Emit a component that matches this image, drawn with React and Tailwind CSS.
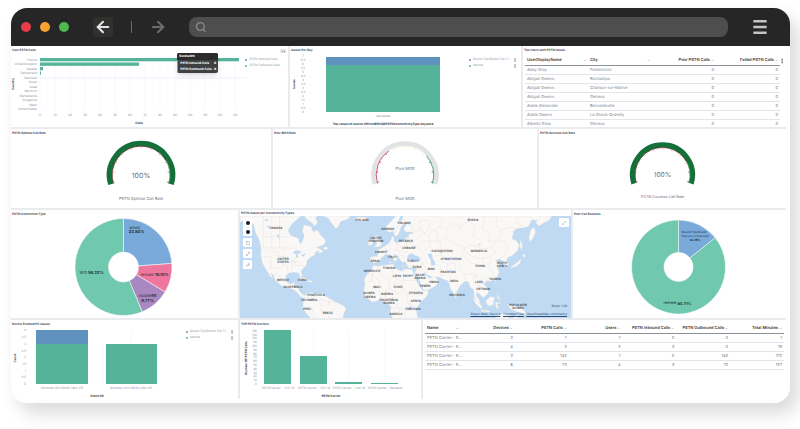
import React, { useState } from "react";
import {
  ArrowLeft,
  ArrowRight,
  ChevronDown,
  Menu,
  Maximize2,
  MoreVertical,
  Search,
  Square,
  Wrench,
} from "lucide-react";

const GREEN = "#54b399";
const BLUE = "#6092c0";

const countries = [
  { name: "France", value: 199 },
  { name: "United Kingdom", value: 99 },
  { name: "Canada", value: 3 },
  { name: "Switzerland", value: 1 },
  { name: "Denmark", value: 0 },
  { name: "Brazil", value: 0 },
  { name: "Israel", value: 0 },
  { name: "Morocco", value: 0 },
  { name: "Netherlands", value: 0 },
  { name: "Singapore", value: 0 },
  { name: "Spain", value: 0 },
  { name: "United States", value: 0 },
];

const users = [
  ["Abby Gray", "Fredericton", 0, 0],
  ["Abigail Owens", "Rochampa", 0, 0],
  ["Abigail Owens", "Champs-sur-Marne", 0, 0],
  ["Abigail Owens", "Geneva", 0, 0],
  ["Adele Alexander", "Bernardsville", 0, 0],
  ["Adele Owens", "Le Grand-Quevilly", 0, 0],
  ["Alberto Silva", "Geneva", 0, 0],
];

const carriers = [
  ["PSTN Carrier - E...", 2, 1, 1, 0, 0, 1],
  ["PSTN Carrier - E...", 4, 3, 3, 3, 0, 15],
  ["PSTN Carrier - E...", 2, 142, 1, 0, 140, 172],
  ["PSTN Carrier - E...", 6, 73, 4, 3, 70, 127],
];

const mapLabels = [
  ["CANADA", 36, 12],
  ["UNITED", 43, 43],
  ["STATES", 43, 46],
  ["MEXICO", 43, 64],
  ["CUBA", 62, 64],
  ["GUATEMALA", 53, 71],
  ["VENEZUELA", 76, 79],
  ["COLOMBIA", 69, 84],
  ["PERU", 67, 93],
  ["BRAZIL", 88, 97],
  ["ICELAND", 122, 4],
  ["UNITED", 136, 22],
  ["KINGDOM", 136, 25],
  ["NORWAY", 148, 13],
  ["FINLAND", 164, 7],
  ["FRANCE", 141, 36],
  ["SPAIN", 135, 45],
  ["ITALY", 152, 41],
  ["BELARUS", 166, 25],
  ["UKRAINE", 169, 32],
  ["RUSSIA", 233, 4],
  ["MOROCCO", 132, 55],
  ["TUNISIA", 149, 52],
  ["LIBYA", 157, 60],
  ["EGYPT", 168, 60],
  ["MALI", 137, 71],
  ["CHAD", 158, 71],
  ["GUINEA", 129, 77],
  ["LIBERIA", 130, 81],
  ["NIGERIA", 147, 78],
  ["EQUATORIAL", 149, 84],
  ["GUINEA", 149, 87],
  ["ETHIOPIA", 176, 77],
  ["KENYA", 176, 85],
  ["TANZANIA", 173, 93],
  ["ANGOLA", 156, 98],
  ["TURKEY", 173, 45],
  ["SYRIA", 177, 51],
  ["SAUDI", 180, 59],
  ["ARABIA", 180, 62],
  ["YEMEN", 185, 70],
  ["OMAN", 194, 66],
  ["IRAN", 191, 53],
  ["KAZAKHSTAN", 202, 35],
  ["KYRGYZSTAN", 211, 43],
  ["PAKISTAN", 208, 56],
  ["INDIA", 214, 65],
  ["SRI LANKA", 217, 79],
  ["MONGOLIA", 239, 35],
  ["CHINA", 240, 50],
  ["SOUTH", 262, 47],
  ["KOREA", 262, 50],
  ["TAIWAN", 255, 63],
  ["LAOS", 239, 66],
  ["VIETNAM", 243, 73],
  ["PAPUA NEW", 278, 89],
  ["GUINEA", 278, 92],
];

// Point on a circle, 0 degrees is at the top and it goes clockwise
const polar = (cx, cy, r, deg) => {
  const a = ((deg - 90) * Math.PI) / 180;
  return [cx + r * Math.cos(a), cy + r * Math.sin(a)];
};

const arcPath = (cx, cy, r, from, to) => {
  const [x1, y1] = polar(cx, cy, r, from);
  const [x2, y2] = polar(cx, cy, r, to);
  return `M${x1} ${y1}A${r} ${r} 0 ${to - from > 180 ? 1 : 0} 1 ${x2} ${y2}`;
};

const slicePath = (cx, cy, r, inner, from, to) => {
  const [x1, y1] = polar(cx, cy, inner, to);
  const [x2, y2] = polar(cx, cy, inner, from);
  const large = to - from > 180 ? 1 : 0;
  return `${arcPath(cx, cy, r, from, to)}L${x1} ${y1}A${inner} ${inner} 0 ${large} 0 ${x2} ${y2}Z`;
};

const Panel = ({ title, tight, children }) => (
  <section className="relative min-w-0 bg-white">
    {title && (
      <h2
        className={`pl-px text-[3px] font-bold whitespace-nowrap text-[#4a4d57] ${
          tight ? "h-[6px] leading-[6px]" : "h-2 leading-[8px]"
        }`}
      >
        {title}
      </h2>
    )}
    {children}
  </section>
);

const Tick = ({ x, y, anchor = "middle", children }) => (
  <text
    x={x}
    y={y}
    textAnchor={anchor}
    dominantBaseline="central"
    className="fill-[#8a8f9b] text-[3px]"
  >
    {children}
  </text>
);

const AxisTitle = ({ x, y, vertical, children }) => (
  <text
    x={x}
    y={y}
    textAnchor="middle"
    dominantBaseline="central"
    transform={vertical ? `rotate(-90 ${x} ${y})` : undefined}
    className="fill-[#343741] text-[3px] font-bold"
  >
    {children}
  </text>
);

const Legend = ({ items, menu, className }) => (
  <ul
    className={`absolute flex flex-col gap-px text-[3px] leading-[5px] text-[#8a8f9b] ${className}`}
  >
    {items.map((item) => (
      <li key={item.label} className="flex items-center gap-[2px]">
        <span className={`size-[2px] rounded-full ${item.dot}`} />
        <span className="flex-1 whitespace-nowrap">{item.label}</span>
        {menu && <MoreVertical size={4} className="text-[#343741]" />}
      </li>
    ))}
  </ul>
);

const issueLegend = [
  { label: "Round Trip/Round Trip Ti...", dot: "bg-[#6092c0]" },
  { label: "remote", dot: "bg-[#54b399]" },
];

const UserCalls = () => (
  <Panel title="User PSTN Calls">
    <svg viewBox="0 0 277 73" className="h-[73px] w-full">
      {Array.from({ length: 14 }, (_, i) => (
        <g key={i}>
          <path
            d={`M${29 + i * 15} 3V57`}
            stroke="#eef0f4"
            strokeWidth="0.5"
          />
          <Tick x={29 + i * 15} y={61}>
            {i * 10}
          </Tick>
        </g>
      ))}
      <path d="M29 24H236" stroke="#eaf0f8" />
      {countries.map((c, i) => (
        <g key={c.name}>
          <Tick x={26} y={5.5 + i * 4.5} anchor="end">
            {c.name}
          </Tick>
          <rect
            x="29"
            y={4 + i * 4.5}
            width={c.value}
            height="3.3"
            fill={GREEN}
          />
        </g>
      ))}
      <AxisTitle x={128} y={69}>
        Calls
      </AxisTitle>
      <AxisTitle x={2} y={30} vertical>
        Country
      </AxisTitle>
    </svg>

    {/* Tooltip */}
    <div className="absolute top-[7px] left-[60%] w-[41px] overflow-hidden rounded-xs bg-[#404040] text-[3px] leading-[5px] font-bold text-white shadow-md">
      <p className="bg-[#2b2b2b] px-[2px] py-px">Bandwidth</p>
      <div className="flex flex-col gap-px border-l border-[#54b399] py-px pl-[2px]">
        <p className="flex justify-between pr-[2px]">
          PSTN Inbound Calls <b>0</b>
        </p>
        <p className="flex justify-between pr-[2px]">
          PSTN Outbound Calls <b>0</b>
        </p>
      </div>
    </div>

    <button
      type="button"
      aria-label="Panel options"
      className="absolute top-[3px] right-[2px] flex h-[4px] w-[6px] items-center justify-center gap-px rounded-[1px] bg-[#e2e4e9]"
    >
      <i className="size-px bg-[#8a8f9b]" />
      <i className="size-px bg-[#8a8f9b]" />
    </button>
    <Legend
      className="top-[11px] right-2"
      items={[
        { label: "PSTN Inbound Calls", dot: "bg-[#6092c0]" },
        { label: "PSTN Outbound Calls", dot: "bg-[#54b399]" },
      ]}
    />
  </Panel>
);

const IssuesPerDay = () => (
  <Panel title="Issues Per Day">
    <svg viewBox="0 0 231 73" className="h-[73px] w-full">
      {Array.from({ length: 15 }, (_, i) => (
        <Tick key={i} x={13} y={58 - i * 4} anchor="middle">
          {i % 2 ? `${(i - 1) / 2}.5` : i / 2}
        </Tick>
      ))}
      <rect x="36" y="3" width="114" height="8" fill={BLUE} />
      <rect x="36" y="11" width="114" height="47" fill={GREEN} />
      <Tick x={93} y={62}>
        calculated
      </Tick>
      <AxisTitle x={93} y={70}>
        Top values of source.Office365CQDPSTNConnectivityType.keyword
      </AxisTitle>
      <AxisTitle x={4} y={30} vertical>
        Issues
      </AxisTitle>
    </svg>
    <Legend items={issueLegend} menu className="top-[11px] right-1" />
  </Panel>
);

const DataTable = ({ headers, rows, textCols, label }) => (
  <table
    aria-label={label}
    className="w-full table-fixed border-collapse text-[4px] leading-[8px] whitespace-nowrap"
  >
    <thead>
      <tr className="h-[9px] border-b border-[#8b8f98] text-[#343741]">
        {headers.map((h, i) => (
          <th
            key={h}
            className={
              i < textCols
                ? "p-0 px-[2px] font-semibold first:w-[var(--first)]"
                : "p-0 pr-[2px] font-semibold"
            }
          >
            <span
              className={`flex items-center gap-px ${
                i < textCols ? "justify-between" : "justify-end"
              }`}
            >
              {h}
              <ChevronDown size={3} className="shrink-0" />
            </span>
          </th>
        ))}
      </tr>
    </thead>
    <tbody>
      {rows.map((row, r) => (
        <tr key={r} className="h-[9px] border-b border-[#e3e5ea] text-[#7b808c]">
          {row.map((cell, i) => (
            <td
              key={i}
              className={i < textCols ? "p-0 px-[2px]" : "p-0 pr-[2px] text-right"}
            >
              {cell}
            </td>
          ))}
        </tr>
      ))}
    </tbody>
  </table>
);

const Gauge = ({ title, value, label, full }) => (
  <Panel title={title}>
    <svg viewBox="0 0 260 71" className="h-[71px] w-full">
      <path
        d={arcPath(130, 38, 31.5, -107, 107)}
        fill="none"
        stroke={full ? "#13703b" : "#e2e3e5"}
        strokeWidth={full ? 5.5 : 4.5}
      />
      <path
        d={arcPath(130, 38, 28.8, -107, full ? 60 : -34)}
        fill="none"
        stroke={full ? "#6b3a35" : "#b0305c"}
        strokeWidth="0.8"
      />
      {!full && (
        <path
          d={arcPath(130, 38, 28.8, -34, 48)}
          fill="none"
          stroke="#f4f3cf"
          strokeWidth="0.8"
        />
      )}
      <path
        d={arcPath(130, 38, 28.8, full ? 60 : 48, 107)}
        fill="none"
        stroke={full ? "#7fae6a" : "#2f7d68"}
        strokeWidth="0.8"
      />
      {Array.from({ length: 11 }, (_, i) => {
        const deg = -105 + i * 21;
        const [x1, y1] = polar(130, 38, 29, deg);
        const [x2, y2] = polar(130, 38, 26.8, deg);
        const side = deg < -34 ? "#c8485a" : deg > 48 ? "#2f7d68" : "#ecebc4";
        return (
          <path
            key={i}
            d={`M${x1} ${y1}L${x2} ${y2}`}
            stroke={full && i < 9 ? "#d98580" : side}
            strokeWidth="0.7"
          />
        );
      })}
      <text
        x="130"
        y={full ? 38 : 31}
        textAnchor="middle"
        dominantBaseline="central"
        className={
          full ? "fill-[#69707d] text-[7px]" : "fill-[#69707d] text-[4px]"
        }
      >
        {value}
      </text>
      <text
        x="130"
        y="61"
        textAnchor="middle"
        dominantBaseline="central"
        className="fill-[#69707d] text-[4px]"
      >
        {label}
      </text>
    </svg>
  </Panel>
);

const Donut = ({ title, slices, labels }) => {
  let start = 0;

  return (
    <Panel title={title}>
      <svg viewBox="0 0 220 100" className="h-[100px] w-full">
        {slices.map((s) => {
          const from = start;
          start += s.share * 3.6;
          return (
            <path
              key={s.fill}
              d={slicePath(109, 49, 48.5, 15, from, start)}
              fill={s.fill}
              stroke="#fff"
              strokeWidth="0.5"
            />
          );
        })}
        {labels.map((l) => (
          <text
            key={l.y}
            x={l.x}
            y={l.y}
            textAnchor="middle"
            dominantBaseline="central"
            className={
              l.small
                ? "fill-[#1c2b33] text-[3px]"
                : "fill-[#1c2b33] text-[4px]"
            }
          >
            {l.text} <tspan className="font-bold">{l.value}</tspan>
          </text>
        ))}
      </svg>
    </Panel>
  );
};

const WorldMap = () => (
  <Panel title="PSTN Issues per Connectivity Types" tight>
    <div className="relative bg-[#bfdaf2]">
      <svg
        viewBox="0 0 331 102"
        preserveAspectRatio="xMidYMid slice"
        className="h-[102px] w-full"
      >
        <g transform="scale(.3333) translate(-13 -33)">
          <g fill="#faf8f6" stroke="#e2dfdc" strokeWidth="1">
            {/* North and Central America */}
            <path d="M13 33H196L182 46 168 58 157 76 166 92 188 100 192 116 200 110 206 92 200 80 204 60 226 64 232 80 245 75 256 91 270 106 266 118 242 128 252 131 264 140 248 146 251 138 240 141 238 149 224 157 214 167 213 179 204 189 196 198 200 213 194 217 190 205 178 202 161 203 150 212 152 230 163 238 178 232 173 245 188 246 190 257 200 268 212 272 206 280 196 276 184 262 172 253 155 248 134 240 119 226 114 211 105 203 112 222 103 213 92 195 81 176 75 151 76 130 71 106 60 84 54 60 46 50 30 45 13 52Z" />
            <path d="M205 33 213 42 230 55 237 64 246 52 240 40 244 33Z" />
            <path d="M262 33 278 40 289 56 301 71 309 64 314 50 337 42 343 33Z" />
            <path d="M262 128 275 125 276 133 266 134ZM188 218 202 217 215 224 204 223ZM216 226 230 227 228 232 216 231Z" />
            {/* South America */}
            <path d="M206 275 215 266 226 262 240 266 258 265 270 274 284 281 298 290 322 301 331 311 325 325 321 341H226L213 326 201 309 203 293Z" />
            {/* Europe and Asia */}
            <path d="M404 169 404 156 425 154 428 145 419 136 432 133 446 124 458 116 466 105 468 95 476 95 474 108 484 114 500 109 511 106 511 97 520 96 518 88 535 85 524 81 508 80 505 70 514 57 508 50 496 67 491 82 484 94 476 91 474 77 463 82 452 77 450 66 465 50 480 33H948L941 46 925 53 911 63 899 52 906 46 888 45 880 62 868 68 847 70 834 78 829 102 841 106 851 119 846 136 831 151 818 157 812 166 819 177 812 187 803 183 803 169 791 162 779 166 786 172 796 175 785 186 791 202 783 218 767 228 753 229 744 237 756 250 758 265 743 278 732 268 724 261 722 272 733 287 729 294 716 276 714 254 703 246 699 230 687 229 673 243 664 260 656 269 645 253 638 228 623 223 609 216 598 217 611 229 600 243 573 257 563 254 548 227 535 207 543 193 540 187 520 190 512 178 510 171 500 172 492 163 487 153 475 148 485 163 476 171 474 160 464 150 450 148 440 156 430 168 416 174Z" />
            {/* Africa */}
            <path d="M413 181 427 184 452 180 474 178 478 190 497 198 507 192 530 194 536 213 550 238 562 257 579 258 574 273 553 294 541 312 547 341H471L464 320 466 306 454 292 443 290 430 286 410 291 398 282 384 263 388 238 386 224 394 208 408 195Z" />
            <path d="M359 39 371 36 391 37 395 43 382 48 366 47ZM417 93 426 90 428 103 440 118 430 125 414 126 424 116 415 105ZM399 108 411 105 411 119 398 121Z" />
            <path d="M458 170 468 170 464 174ZM497 182 508 183 502 185ZM524 182 534 181 529 185Z" />
            {/* Pacific islands */}
            <path d="M885 75 895 66 900 82 890 103 883 110 880 97ZM855 105 861 121 857 137 853 122ZM862 147 871 151 863 160ZM858 160 852 176 838 186 822 188 835 179 849 169ZM778 221 783 227 778 231ZM785 262 790 277 797 288 786 280ZM750 288 764 275 777 277 772 300 757 303ZM711 276 725 286 741 307 734 310 719 294ZM735 314 764 318 760 322 738 319ZM779 291 795 294 784 298 790 311 781 307ZM813 297 836 302 862 313 872 326 847 322 825 311ZM777 341 785 332 803 325 821 328 818 341ZM833 341 841 325 849 341ZM656 267 664 273 660 280Z" />
          </g>

          {/* Inland seas, gulfs and lakes */}
          <g fill="#bfdaf2">
            <path d="M516 151 527 144 538 151 549 154 557 164 535 166 515 165ZM575 148 588 145 590 158 598 171 598 182 587 181 585 166ZM563 200 577 211 592 216 583 220 571 212ZM536 200 549 220 562 251 557 251 543 230ZM174 139 190 136 199 145 188 144 187 158 181 159 182 146 174 147ZM195 151 212 144 203 155ZM494 33 504 33 497 48 488 50ZM612 138 622 139 618 148ZM726 122 736 112 733 121ZM89 64 104 62 101 68ZM83 45 98 41 96 49ZM123 86 131 91 131 104ZM520 305 528 303 528 313 520 313Z" />
          </g>

          {/* Country and state borders */}
          <g fill="none" stroke="#e0d3d3" strokeWidth="1">
            <path d="M76 129H173L187 137M75 155H105V188L125 205M105 140H128V170M128 155H152M144 129V181L156 184V203M105 188H144M152 150 169 172M170 155V197M178 158V182H205M156 171H195M83 33V129M108 33V129M132 33V129M83 95H158M192 115 201 129" />
            <path d="M117 211 131 211 142 222 151 229M240 267 234 280 248 288 254 283 270 289M216 303 232 312 228 325 240 341M234 283 220 290M270 290 298 292M296 310 277 341M258 295 257 319 290 322M282 283 276 306" />
            <path d="M388 207H409L431 192M430 186 440 214 461 228 474 217 469 194M504 194V226H553M504 226 500 242 475 231M474 217 499 230M409 207V229L388 232M409 210 434 230 429 249 408 251M461 229 459 249 475 259M430 249 435 287M450 253 449 286M459 249 443 260M475 233 481 266 498 263 497 246M500 242 512 268 529 270M540 247 533 268 560 270M481 266 467 284M485 281 485 304 510 315 521 294 528 285M516 270 515 290 541 308M467 308 490 310 493 341M511 316 507 341" />
            <path d="M428 155 442 158M410 157 409 169M446 125 456 137 463 145M463 116 466 131 454 140M480 114 484 129 475 134M484 115 500 128 515 126 512 109M495 130 505 142 518 139M477 133 493 138 489 148 505 153 503 164M512 109 528 115 541 126 557 139M517 97 527 113M480 84 490 55 508 40M510 47 517 57 530 62 532 83M558 159 571 163M545 169 561 171 557 187 540 188M561 172 575 201M548 191 560 193 575 209M570 236 591 228M596 177 614 181 617 216M567 136 582 125 584 108 612 108 631 98 663 119 685 126M591 155 617 151 640 170 649 165 673 162 684 145 686 126M617 169 635 176 633 203 617 216M635 179 659 174 658 197 642 208 644 223M672 173 669 190 688 208 711 207 719 211 713 231M686 128 705 119 742 132 770 128 782 142 757 157 728 160 701 151 686 134M771 126 786 104 806 111 817 131 805 154 789 161M719 207 729 232 748 238M729 212 743 221 756 228M719 233 731 242 728 258M688 209 690 226" />
            <path d="M532 83 552 74 569 84 579 69 597 76 616 63 634 71 650 52 669 64 682 84M552 73 549 51 569 43 583 57 579 68M584 107 578 91 589 76M602 107 609 87 596 76M634 72 631 96M611 34 620 49 616 62M669 65 697 49 718 62 712 94 732 105M746 34 740 70 762 84 758 111 785 103M785 34 780 60 797 76 790 104M797 75 822 67 845 72M846 34 839 50 866 67M642 131 630 146M612 108 616 134M705 51 699 33M539 107 552 92 569 84M541 125 554 112 580 107M687 151 700 172 723 178 737 196M740 159 744 182 765 192 778 218M724 178 750 183M766 156 765 174 750 181" />
          </g>
        </g>
        {mapLabels.map(([name, x, y], i) => (
          <text
            key={i}
            x={x}
            y={y}
            textAnchor="middle"
            dominantBaseline="central"
            className="fill-[#4b4b4f] text-[3px] font-semibold"
          >
            {name}
          </text>
        ))}
      </svg>

      {/* Map tools */}
      <div className="absolute top-[2px] left-[3px] flex w-[9px] flex-col gap-[2px] text-[#69707d]">
        <div className="flex h-[18px] flex-col items-center justify-around rounded-[1px] bg-white">
          <button type="button" aria-label="Zoom in" className="size-1 rounded-full bg-[#1d1e24]" />
          <button type="button" aria-label="Zoom out" className="size-1 rounded-full bg-[#1d1e24]" />
        </div>
        <button type="button" aria-label="Draw shape" className="flex h-[9px] items-center justify-center rounded-[1px] bg-white">
          <Square size={4} />
        </button>
        <button type="button" aria-label="Fit to data" className="flex h-[9px] items-center justify-center rounded-[1px] bg-white">
          <Maximize2 size={4} />
        </button>
        <button type="button" aria-label="Tools" className="flex h-[9px] items-center justify-center rounded-[1px] bg-white">
          <Wrench size={4} />
        </button>
      </div>
      <button
        type="button"
        aria-label="Expand map"
        className="absolute top-[2px] right-[2px] flex h-[9px] w-[10px] items-center justify-center rounded-[1px] bg-white text-[#69a0d0]"
      >
        <Maximize2 size={4} />
      </button>

      <div className="absolute right-1 bottom-[2px] flex flex-col items-end gap-[4px] text-[3px] leading-[4px] text-[#343741]">
        <span>Zoom: 1.39</span>
        <p className="flex gap-[3px] text-[#2b4a78] underline">
          <a href="#ems">Elastic Maps Service</a>
          <a href="#tiles">OpenMapTiles</a>
          <a href="#osm">OpenStreetMap contributors</a>
        </p>
      </div>
    </div>
  </Panel>
);

const DeviceIssues = () => (
  <Panel title="Device Enabled PC Issues">
    <svg viewBox="0 0 227 71" className="h-[71px] w-full">
      {["0", "0.5", "1", "1.5", "2", "2.5", "3", "3.5", "4"].map((t, i) => (
        <Tick key={t} x={15} y={56 - i * 6.7} anchor="end">
          {t}
        </Tick>
      ))}
      <path d="M51 2V57M120 2V57" stroke="#eef0f4" strokeWidth="0.5" />
      <rect x="25" y="2" width="52" height="14" fill={BLUE} />
      <rect x="25" y="16" width="52" height="40" fill={GREEN} />
      <rect x="95" y="16" width="51" height="40" fill={GREEN} />
      <Tick x={51} y={60}>
        Windows 10.0.19045 (x64-v5)
      </Tick>
      <Tick x={120} y={60}>
        Windows 10.0.19044 (x64-v5)
      </Tick>
      <AxisTitle x={86} y={68}>
        Client OS
      </AxisTitle>
      <AxisTitle x={4} y={30} vertical>
        Count
      </AxisTitle>
    </svg>
    <Legend items={issueLegend} menu className="top-[9px] right-1" />
  </Panel>
);

const carrierBars = [
  { x: 24, h: 54, label: "PSTN Carrier - +33 1 86" },
  { x: 60, h: 28, label: "PSTN Carrier - +33 1 84" },
  { x: 95, h: 2, label: "PSTN Carrier - +44 1 84" },
  { x: 131, h: 1, label: "PSTN Carrier - Bandwidth" },
];

const TopCarriers = () => (
  <Panel title="TOP PSTN Carriers">
    <svg viewBox="0 0 181 71" className="h-[71px] w-full">
      {Array.from({ length: 15 }, (_, i) => (
        <Tick key={i} x={17} y={56 - i * 3.8} anchor="end">
          {i * 10}
        </Tick>
      ))}
      {carrierBars.map((b) => (
        <g key={b.label}>
          <path d={`M${b.x + 14} 2V57`} stroke="#eef0f4" strokeWidth="0.5" />
          <rect x={b.x} y={56 - b.h} width="27" height={b.h} fill={GREEN} />
          <Tick x={b.x + 14} y={60}>
            {b.label.slice(0, 22)}
          </Tick>
        </g>
      ))}
      <AxisTitle x={91} y={68}>
        PSTN Carrier
      </AxisTitle>
      <AxisTitle x={6} y={30} vertical>
        Number OF PSTN Calls
      </AxisTitle>
    </svg>
  </Panel>
);

const App = () => {
  const [query, setQuery] = useState("");

  return (
    <div className="bg-white pt-2 pr-[10px] pb-[26px] pl-[11px] font-['Inter',sans-serif] [text-rendering:geometricPrecision]">
      <div className="overflow-hidden rounded-2xl bg-white shadow-[8px_10px_18px_rgba(0,0,0,0.15)]">
        {/* Browser bar */}
        <header className="flex h-[38px] items-center bg-[#262626] pr-5 pl-[10px]">
          <div className="flex gap-[9px]">
            <span className="size-[10px] rounded-full bg-[#e63c4b]" />
            <span className="size-[10px] rounded-full bg-[#f8a032]" />
            <span className="size-[10px] rounded-full bg-[#4fb84e]" />
          </div>
          <button
            type="button"
            aria-label="Back"
            className="ml-6 flex size-5 items-center justify-center rounded-xs bg-[#31302f] text-[#e4e4e4]"
          >
            <ArrowLeft size={18} strokeWidth={2.8} />
          </button>
          <span className="ml-[18px] h-3 w-px bg-[#6b6b6b]" />
          <button
            type="button"
            aria-label="Forward"
            className="ml-4 flex size-5 items-center justify-center text-[#6b6b6b]"
          >
            <ArrowRight size={18} strokeWidth={2.8} />
          </button>
          <label className="ml-[21px] flex h-5 min-w-0 flex-1 items-center gap-1 rounded-lg bg-[#4e4e4e] px-[6px] text-[#8b8b8b]">
            <Search size={12} strokeWidth={2.8} />
            <input
              type="text"
              aria-label="Address"
              value={query}
              onChange={(e) => setQuery(e.target.value)}
              className="w-full bg-transparent text-xs text-white outline-none"
            />
          </label>
          <button type="button" aria-label="Menu" className="ml-[22px] text-[#c4c4c4]">
            <Menu size={20} strokeWidth={3} strokeLinecap="butt" />
          </button>
        </header>

        {/* Dashboard */}
        <main className="bg-white pr-1 pb-1">
          <div className="flex flex-col gap-[2px] bg-[#e9ebef]">
            <div className="grid grid-cols-[277fr_231fr_263fr] gap-[2px]">
              <UserCalls />
              <IssuesPerDay />
              <Panel title="Top Users with PSTN Issues">
                <div className="h-[73px] overflow-hidden px-[2px] pt-[2px] pr-[6px] [--first:63px]">
                  <DataTable
                    label="Top users with PSTN issues"
                    headers={[
                      "UserDisplayName",
                      "City",
                      "Poor PSTN Calls",
                      "Failed PSTN Calls",
                    ]}
                    rows={users}
                    textCols={2}
                  />
                </div>
                <MoreVertical
                  size={6}
                  className="absolute top-3 right-px text-[#343741]"
                />
              </Panel>
            </div>

            <div className="grid grid-cols-[260fr_264fr_247fr] gap-[2px]">
              <Gauge
                title="PSTN Optimal Call Rate"
                value="100%"
                label="PSTN Optimal Call Rate"
                full
              />
              <Gauge title="Poor MOS Rate" value="Poor MOS" label="Poor MOS" />
              <Gauge
                title="PSTN Success Call Rate"
                value="100%"
                label="PSTN Success Call Rate"
                full
              />
            </div>

            <div className="grid grid-cols-[227fr_331fr_213fr] gap-[2px]">
              <Donut
                title="PSTN Connection Type"
                slices={[
                  { share: 23.84, fill: "#79aad9" },
                  { share: 9.77, fill: "#ee789d" },
                  { share: 10.1, fill: "#a987c0" },
                  { share: 56.29, fill: "#70c8ae" },
                ]}
                labels={[
                  { x: 120, y: 9, text: "wired" },
                  { x: 122, y: 13, value: "23.84%" },
                  { x: 140, y: 56, text: "remote", value: "10.10%" },
                  { x: 133, y: 77, text: "mobileBB" },
                  { x: 133, y: 82, value: "9.77%" },
                  { x: 77, y: 54, text: "Wifi", value: "56.33%" },
                ]}
              />
              <WorldMap />
              <Donut
                title="Poor Call Reasons"
                slices={[
                  { share: 14.29, fill: "#79aad9" },
                  { share: 85.71, fill: "#70c8ae" },
                ]}
                labels={[
                  { x: 125, y: 13, text: "Round Trip/Round", small: true },
                  { x: 126, y: 17, text: "Trip Loss Threshold", small: true },
                  { x: 126, y: 21, value: "14.29%", small: true },
                  { x: 108, y: 86, text: "remote", value: "85.71%" },
                ]}
              />
            </div>

            <div className="grid grid-cols-[227fr_181fr_363fr] gap-[2px]">
              <DeviceIssues />
              <TopCarriers />
              <Panel>
                <div className="px-[2px] pt-1 [--first:36px]">
                  <DataTable
                    label="PSTN carriers"
                    headers={[
                      "Name",
                      "Devices",
                      "PSTN Calls",
                      "Users",
                      "PSTN Inbound Calls",
                      "PSTN Outbound Calls",
                      "Total Minutes",
                    ]}
                    rows={carriers}
                    textCols={1}
                  />
                </div>
              </Panel>
            </div>
          </div>
        </main>
      </div>
    </div>
  );
};

export default App;
